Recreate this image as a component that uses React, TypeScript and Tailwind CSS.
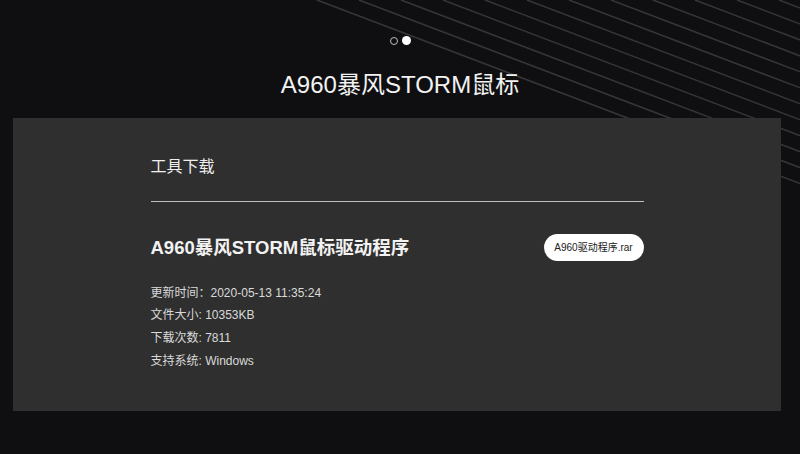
import React from "react";

const info = [
  { label: "更新时间：", value: "2020-05-13 11:35:24" },
  { label: "文件大小: ", value: "10353KB" },
  { label: "下载次数: ", value: "7811" },
  { label: "支持系统: ", value: "Windows" },
];

// diagonal streaks in the top-right corner of the backdrop
function Streaks() {
  const starts = Array.from({ length: 13 }, (_, i) => 317 + i * 42);
  return (
    <svg className="absolute inset-0 pointer-events-none" width="800" height="454" viewBox="0 0 800 454">
      {starts.map((x) => (
        <line key={x} x1={x} y1={0} x2={x + 1100} y2={418} stroke="#36363a" strokeWidth="1.5" />
      ))}
    </svg>
  );
}

export default function App() {
  return (
    <div className="relative w-[800px] h-[454px] overflow-hidden bg-[#0f0f11] font-['Liberation_Sans','Noto_Sans_CJK_SC',sans-serif]">
      <Streaks />
      <div className="relative flex flex-col items-center">
        <div className="flex items-center gap-[4px] mt-[36px]">
          <span className="w-[8px] h-[8px] rounded-full border-[1.5px] border-[#bdbdbd]" />
          <span className="w-[9px] h-[9px] rounded-full bg-white" />
        </div>
        <h1 className="mt-[24px] text-[24px] leading-[32px] text-[#f2f2f2]">A960暴风STORM鼠标</h1>
      </div>

      <div className="relative mt-[17px] ml-[13px] w-[768px] h-[293px] bg-[#2f2f2f]">
        <div className="mx-auto w-[493px] pt-[37px]">
          <div className="text-[16px] leading-[24px] text-[#eeeeee]">工具下载</div>
          <div className="mt-[22px] h-px bg-[#bfbfbf]" />

          <div className="mt-[32px] flex items-center justify-between">
            <div className="text-[18.5px] font-bold text-[#f2f2f2]">A960暴风STORM鼠标驱动程序</div>
            <button className="w-[100px] h-[27px] rounded-full bg-white text-[10px] text-[#222]">
              A960驱动程序.rar
            </button>
          </div>

          <div className="mt-[20px] flex flex-col text-[12px] leading-[22.7px] text-[#dadada]">
            {info.map((row) => (
              <div key={row.label} className="whitespace-pre">
                {row.label}
                {row.value}
              </div>
            ))}
          </div>
        </div>
      </div>
    </div>
  );
}
